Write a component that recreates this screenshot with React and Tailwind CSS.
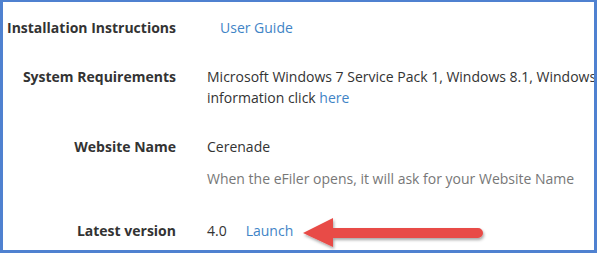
export default function App() {
  const font = { fontFamily: '"Open Sans", "Noto Sans", sans-serif' };
  return (
    <div
      className="relative h-[253px] w-[597px] overflow-hidden border-x-[3px] border-t-2 border-b-[3px] border-[#4f81d0] bg-white text-[14px] leading-[21px] text-[#333]"
      style={font}
    >
      <div className="flex flex-col pt-[15px]">
        <div className="flex">
          <div className="w-[173px] shrink-0 text-right font-bold">Installation Instructions</div>
          <div className="ml-[44px] whitespace-nowrap">
            <a className="text-[#3f84c6]">User Guide</a>
          </div>
        </div>

        <div className="mt-[28px] flex">
          <div className="w-[173px] shrink-0 text-right font-bold">System Requirements</div>
          <div className="ml-[31px] whitespace-nowrap">
            <div>Microsoft Windows 7 Service Pack 1, Windows 8.1, Windows</div>
            <div>
              information click <a className="text-[#3f84c6]">here</a>
            </div>
          </div>
        </div>

        <div className="mt-[28px] flex">
          <div className="w-[173px] shrink-0 text-right font-bold">Website Name</div>
          <div className="ml-[31px] whitespace-nowrap">
            <div>Cerenade</div>
            <div className="mt-[11px] text-[#777]">When the eFiler opens, it will ask for your Website Name</div>
          </div>
        </div>

        <div className="mt-[31px] flex">
          <div className="w-[173px] shrink-0 text-right font-bold">Latest version</div>
          <div className="ml-[31px] flex gap-[19px] whitespace-nowrap">
            <span>4.0</span>
            <a className="text-[#3f84c6]">Launch</a>
          </div>
        </div>
      </div>

      <svg
        className="absolute left-[295px] top-[212px]"
        width="194"
        height="38"
        viewBox="0 0 194 38"
      >
        <defs>
          <filter id="sh" x="-10%" y="-30%" width="120%" height="170%">
            <feDropShadow dx="1" dy="2" stdDeviation="1.5" floodColor="#000" floodOpacity="0.35" />
          </filter>
        </defs>
        <g filter="url(#sh)">
          <path d="M5 19 L35 4 L35 14 L180 14 A5 5 0 0 1 180 24 L35 24 L35 33 Z" fill="#e84b47" />
        </g>
      </svg>
    </div>
  );
}
